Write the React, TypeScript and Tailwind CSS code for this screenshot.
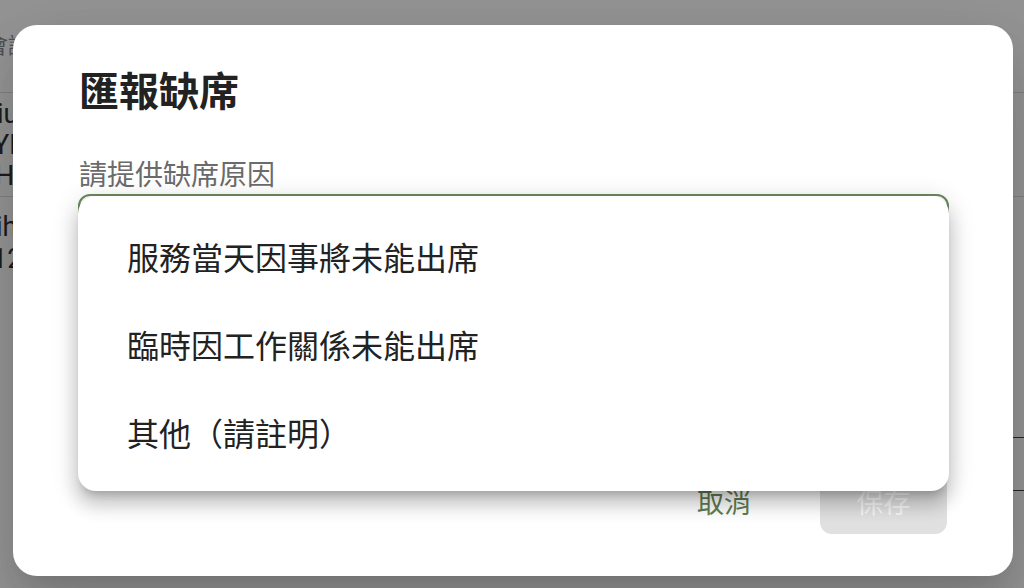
import React from "react";

const font = { fontFamily: '"Noto Sans CJK TC", "Noto Sans", Roboto, sans-serif' };
const latin = { fontFamily: 'Roboto, "Liberation Sans", sans-serif' };

export default function App() {
  return (
    <div className="relative w-[1024px] h-[588px] overflow-hidden bg-white" style={font}>
      {/* background page */}
      <div className="flex h-full w-full justify-between">
        <div className="flex w-[60px] flex-col text-[27px] text-[#333]">
          <div className="h-[92px] pt-[28px] text-[22px] leading-[30px] text-[#888] -ml-[14px]">會議</div>
          <div className="h-[104px] border-t border-[#ddd] pt-[6px] leading-[31px] -ml-[3px]" style={latin}>
            <div>iu</div>
            <div className="-ml-[4px]">YE</div>
            <div className="-ml-[2px]">Ha</div>
          </div>
          <div className="border-t border-[#ddd] pt-[14px] leading-[32px] -ml-[4px]" style={latin}>
            <div>ih</div>
            <div className="-ml-[4px]">12</div>
          </div>
        </div>
        <div className="flex w-[30px] flex-col">
          <div className="h-[92px]" />
          <div className="h-[104px] border-t border-[#ddd]" />
          <div className="h-[241px] border-t border-[#ddd]" />
          <div className="h-[53px] border-t border-[#444]" />
          <div className="border-t border-[#444]" />
        </div>
      </div>

      {/* overlay */}
      <div className="absolute inset-0 bg-black/[0.42]" />

      {/* dialog */}
      <div className="absolute left-[13px] top-[25px] flex h-[551px] w-[1000px] flex-col rounded-[24px] bg-white px-[66px] pt-[36px] pb-[42px] shadow-[0_18px_26px_-12px_rgba(0,0,0,0.14),0_40px_64px_5px_rgba(0,0,0,0.08),0_15px_78px_14px_rgba(0,0,0,0.07)]">
        <div className="text-[40px] font-bold leading-[56px] text-[#222]">匯報缺席</div>
        <div className="mt-[39px] text-[28px] leading-[34px] text-[#6b6b6b]">請提供缺席原因</div>
        <div className="-ml-[1px] mt-[4px] h-[78px] w-[871px] rounded-[12px] border-2 border-[#6b8a5e]" />
        <div className="mt-auto flex items-center justify-end gap-[69px]">
          <button className="text-[27px] leading-[40px] text-[#5f7c53]">取消</button>
          <button className="flex h-[64px] w-[127px] items-center justify-center rounded-[12px] bg-[#e0e0e0] text-[27px] text-[#f6f6f6]">
            保存
          </button>
        </div>
      </div>

      {/* dropdown menu */}
      <div className="absolute left-[78px] top-[196px] w-[871px] rounded-[18px] bg-white pt-[16px] pb-[15px] shadow-[0_8px_9px_-5px_rgba(0,0,0,0.2),0_14px_17px_2px_rgba(0,0,0,0.14),0_5px_24px_4px_rgba(0,0,0,0.12)]">
        {["服務當天因事將未能出席", "臨時因工作關係未能出席", "其他（請註明）"].map((t) => (
          <div key={t} className="flex h-[88px] items-center pl-[49px] text-[32px] text-[#222]">
            {t}
          </div>
        ))}
      </div>
    </div>
  );
}
